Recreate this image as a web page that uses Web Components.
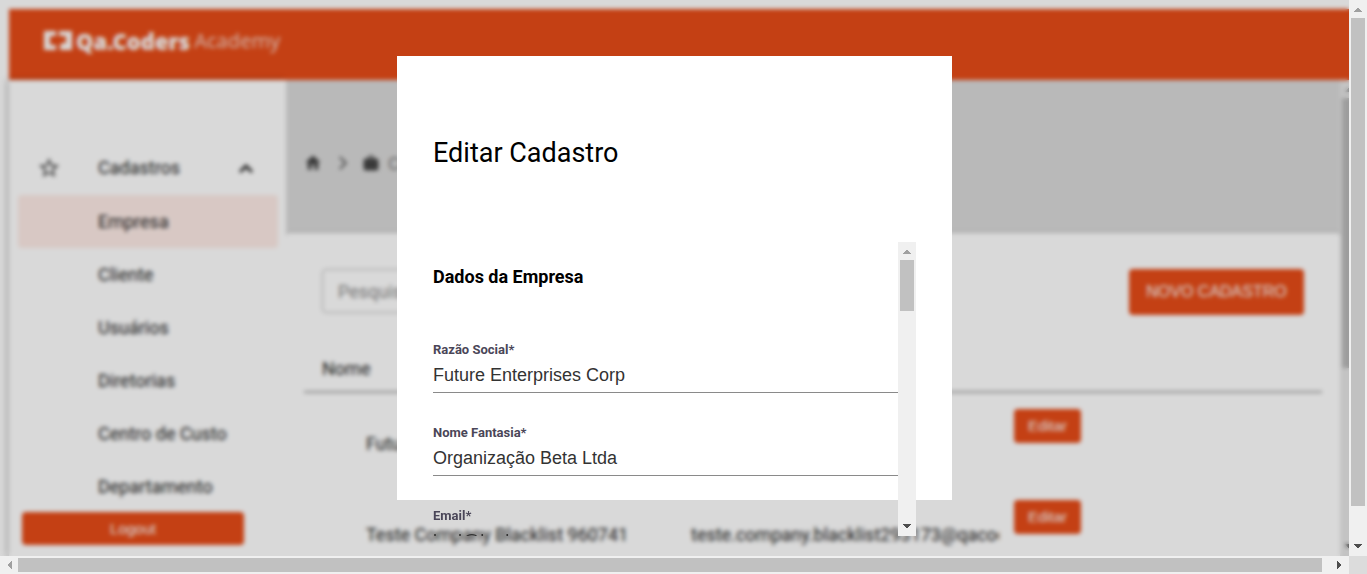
<!DOCTYPE html>
<html lang="pt-BR">
<head>
<meta charset="utf-8">
<title>Qa.Coders Academy</title>
<style>
html, body { margin: 0; height: 100%; overflow: hidden; }
body { font-family: Roboto, "Liberation Sans", sans-serif; font-size: 18px; color: #212121; }
</style>
</head>
<body>
<qa-window>
  <qa-shell>
    <qa-header slot="header"></qa-header>
    <qa-sidebar slot="side"></qa-sidebar>
    <qa-company-list></qa-company-list>
  </qa-shell>
  <qa-dialog slot="dialog" heading="Editar Cadastro">
    <qa-form-section heading="Dados da Empresa">
      <qa-field label="Razão Social*" value="Future Enterprises Corp"></qa-field>
      <qa-field label="Nome Fantasia*" value="Organização Beta Ltda"></qa-field>
      <qa-field label="Email*" value="bcd@bcd.com"></qa-field>
    </qa-form-section>
  </qa-dialog>
</qa-window>
<script>
const define = (name, html, setup) => {
  const template = document.createElement('template');
  template.innerHTML = '<style>*{box-sizing:border-box}:host{box-sizing:border-box}</style>' + html;
  customElements.define(name, class extends HTMLElement {
    constructor() {
      super();
      this.attachShadow({ mode: 'open' }).append(template.content.cloneNode(true));
    }
    connectedCallback() { if (setup) setup(this, this.shadowRoot); }
  });
};

define('qa-scrollbar', `
<style>
:host { display: flex; flex-direction: column; align-items: center; background: #f0f0f0; width: 18px; }
:host([horizontal]) { flex-direction: row; width: auto; height: 18px; }
svg { display: block; flex: none; width: 18px; height: 18px; shape-rendering: crispEdges; }
:host([horizontal]) svg { transform: rotate(-90deg); }
.start { fill: #a0a0a0; } .end { fill: #4d4d4d; }
.track { flex: 1; width: 14px; min-height: 0; }
.thumb { width: 100%; height: var(--thumb, 50%); background: #c1c1c1; }
:host([horizontal]) .track { width: auto; height: 14px; }
:host([horizontal]) .thumb { height: 100%; width: var(--thumb, 50%); }
</style>
<svg class="start" viewBox="0 0 18 18"><path d="M5 12V11H6V10H7V9H8V8H10V9H11V10H12V11H13V12Z"/></svg>
<div class="track"><div class="thumb"></div></div>
<svg class="end" viewBox="0 0 18 18"><path d="M5 6H13V7H12V8H11V9H10V10H8V9H7V8H6V7H5Z"/></svg>`);

define('qa-window', `
<style>
:host { display: grid; grid-template-columns: minmax(0, 1fr) 18px; grid-template-rows: minmax(0, 1fr) 18px; height: 100vh; background: #dcdcdc; }
.stage { position: relative; overflow: hidden; background: #fff; }
.backdrop, .layer { position: absolute; inset: 0; }
.backdrop { background: rgba(0,0,0,.15); backdrop-filter: blur(2px); }
.layer { display: grid; place-items: center; }
.v { --thumb: calc(100% - 32px); } .h { --thumb: calc(100% - 9px); }
</style>
<div class="stage"><slot></slot><div class="backdrop"></div><div class="layer"><slot name="dialog"></slot></div></div>
<qa-scrollbar class="v"></qa-scrollbar>
<qa-scrollbar class="h" horizontal></qa-scrollbar>`);

define('qa-shell', `
<style>
:host { display: grid; grid-template-columns: 277px minmax(0, 1fr) 18px; grid-template-rows: 71px minmax(0, 1fr); height: 100%; padding: 9px 0 0 9px; margin-right: -9px; }
.header { grid-column: 1 / -1; }
.side { box-shadow: -2px 0 6px rgba(0,0,0,.25); background: #fff; min-height: 0; }
.main { min-width: 0; min-height: 0; background: #dadada; overflow: hidden; }
qa-scrollbar { --thumb: 270px; filter: brightness(.96); }
</style>
<div class="header"><slot name="header"></slot></div>
<div class="side"><slot name="side"></slot></div>
<div class="main"><slot></slot></div>
<qa-scrollbar></qa-scrollbar>`);

define('qa-header', `
<style>
:host { display: flex; align-items: center; height: 100%; padding: 0 35px 8px; background: #e74c18; color: #fff; }
.logo { display: flex; align-items: center; gap: 4px; color: inherit; text-decoration: none; font: 700 22px/30px "Noto Sans", sans-serif; }
.logo span { font-weight: 400; font-size: 20px; opacity: .75; }
svg { width: 28px; height: 20px; }
</style>
<a class="logo" href="#"><svg viewBox="0 0 28 20" fill="currentColor"><path d="M0 0H12V5H6V14H12V19H0ZM15 0H28V19H16V14L20 11L22 14V5H15Z"/></svg><b>Qa.Coders</b><span>Academy</span></a>`);

define('qa-sidebar', `
<style>
:host { display: flex; flex-direction: column; height: 100%; padding: 62px 8px 11px 9px; }
nav { flex: 1; min-height: 0; overflow: hidden; }
a, summary { display: flex; align-items: center; height: 53px; padding-left: 80px; border-radius: 4px; color: inherit; text-decoration: none; }
summary { list-style: none; padding: 0 20px 2px 19px; }
summary span { flex: 1; padding-left: 37px; }
svg { width: 24px; height: 24px; }
.active { background: #feece7; }
button { height: 33px; margin: 0 34px 0 4px; border: 0; border-radius: 4px; background: #e74c18; color: #fff; font: 15px/20px "Liberation Sans", sans-serif; flex: none; }
</style>
<nav><details open><summary>
<svg viewBox="0 0 24 24"><path fill="#444" d="m22 9.24-7.19-.62L12 2 9.19 8.63 2 9.24l5.46 4.73L5.82 21 12 17.27 18.18 21l-1.63-7.03L22 9.24zM12 15.4l-3.76 2.27 1-4.28-3.32-2.88 4.38-.38L12 6.1l1.71 4.04 4.38.38-3.32 2.88 1 4.28L12 15.4z"/></svg>
<span>Cadastros</span>
<svg viewBox="0 0 24 24"><path fill="#222" d="M12 8l-7 7 2 2 5-5 5 5 2-2z"/></svg></summary>
<a class="active" href="#">Empresa</a><a href="#">Cliente</a><a href="#">Usuários</a><a href="#">Diretorias</a><a href="#">Centro de Custo</a><a href="#">Departamento</a></details></nav>
<button>Logout</button>`);

define('qa-company-list', `
<style>
:host { display: block; }
.crumbs { display: flex; align-items: flex-start; gap: 11px; height: 153px; padding: 74px 18px 0; color: #777; line-height: 20px; }
.crumbs svg { width: 18px; height: 18px; fill: #444; }
.crumbs .sep { fill: #666; }
.crumbs a { display: flex; gap: 8px; color: inherit; text-decoration: none; }
.card { background: #fff; border-radius: 4px; padding: 36px 18px; height: 400px; box-shadow: 0 1px 4px rgba(0,0,0,.25); }
.tools { display: flex; justify-content: space-between; padding: 0 18px; }
input { width: 240px; height: 44px; border: 1px solid #bbb; border-radius: 4px; padding: 0 15px; font: inherit; background: none; }
input::placeholder { color: #888; opacity: 1; }
button { border: 0; border-radius: 4px; background: #e74c18; color: #fff; font: 15px/20px "Liberation Sans", sans-serif; height: 34px; width: 67px; }
.new { height: 46px; width: 175px; font-size: 16px; }
table { width: 100%; border-collapse: collapse; table-layout: fixed; margin-top: 31px; text-align: left; }
th { font-weight: 400; height: 46px; padding: 0 18px; border-bottom: 2px solid #aaa; }
td { height: 91px; padding: 11px 0 0 62px; white-space: nowrap; overflow: hidden; }
.mail { padding-left: 0; }
.act { padding: 0 0 24px 15px; }
.c1 { width: 387px; } .c2 { width: 308px; }
</style>
<nav class="crumbs" aria-label="Navegação">
<svg viewBox="0 0 24 24"><path d="M12 2 2 11h3v10h5v-7h4v7h5V11h3z"/></svg>
<svg class="sep" viewBox="0 0 24 24"><path d="m8 5 7 7-7 7 2 2 9-9-9-9z"/></svg>
<a href="#"><svg viewBox="0 0 24 24"><path d="M20 6h-4V4l-2-2h-4L8 4v2H4l-2 2v12l2 2h16l2-2V8zm-6 0h-4V4h4z"/></svg>
Cadastro</a></nav>
<div class="card">
<div class="tools"><input placeholder="Pesquisar" aria-label="Pesquisar"><button class="new">NOVO CADASTRO</button></div>
<table>
<colgroup><col class="c1"><col class="c2"><col></colgroup>
<thead><tr><th colspan="3">Nome</th></tr></thead>
<tbody>
<tr><td>Future Corp</td><td class="mail"></td><td class="act"><button>Editar</button></td></tr>
<tr><td>Teste Company Blacklist 960741</td><td class="mail">teste.company.blacklist293173@qacoders.com</td><td class="act"><button>Editar</button></td></tr>
</tbody></table></div>`);

define('qa-dialog', `
<style>
:host { display: flex; flex-direction: column; width: 555px; height: 80%; padding: 77px 36px 0; background: #fff; color: #000; }
h1 { flex: none; margin: 0 0 69px; font: 400 27px/40px Roboto, sans-serif; }
.scroll { flex: none; display: flex; height: 294px; }
.body { flex: 1; min-width: 0; overflow: hidden; }
qa-scrollbar { --thumb: 51px; }
</style>
<h1></h1>
<div class="scroll"><div class="body"><slot></slot></div><qa-scrollbar></qa-scrollbar></div>`,
(el, root) => { root.querySelector('h1').textContent = el.getAttribute('heading'); });

define('qa-form-section', `
<style>
:host { display: block; padding-top: 23px; }
h2 { margin: 0 0 49px; font: 700 18px/24px Roboto, sans-serif; }
</style>
<h2></h2><slot></slot>`,
(el, root) => { root.querySelector('h2').textContent = el.getAttribute('heading'); });

define('qa-field', `
<style>
:host { display: block; margin-bottom: 28px; }
label { display: block; font: 700 13px/24px Roboto, sans-serif; color: #4a4658; }
input { display: block; width: 100%; height: 31px; padding: 1px 0 4px; border: 0; border-bottom: 1px solid #8a8a8a; border-radius: 0; background: none; color: #333; font: 18px/24px "Liberation Sans", Arial, sans-serif; outline: 0; }
</style>
<label for="value"></label><input id="value">`,
(el, root) => {
  root.querySelector('label').textContent = el.getAttribute('label');
  root.querySelector('input').value = el.getAttribute('value');
});
</script>
</body>
</html>
